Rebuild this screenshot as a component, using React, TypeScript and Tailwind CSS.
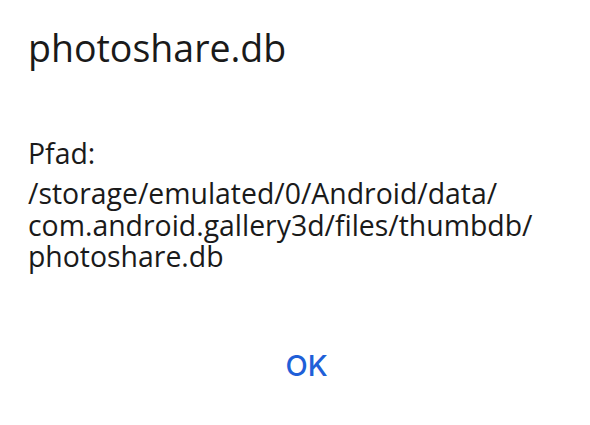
export default function App() {
  return (
    <div
      className="w-[590px] h-[425px] bg-white flex flex-col px-[28px] text-[#1a1a1a]"
      style={{ fontFamily: '"Open Sans", Roboto, sans-serif' }}
    >
      <h1 className="mt-[23px] text-[37.5px] leading-[50px] font-normal">photoshare.db</h1>
      <p className="mt-[64px] text-[28.4px] leading-[32px]">Pfad:</p>
      <p className="mt-[9px] text-[28.4px] leading-[31.5px]">
        /storage/emulated/0/Android/data/
        <br />
        com.android.gallery3d/files/thumbdb/
        <br />
        photoshare.db
      </p>
      <div className="mt-[73px] flex justify-center">
        <button
          className="text-[29px] leading-[40px] text-[#1f5fd8] font-medium pl-[23px]"
          style={{ fontFamily: 'Inter, Roboto, sans-serif' }}
        >
          OK
        </button>
      </div>
    </div>
  );
}
